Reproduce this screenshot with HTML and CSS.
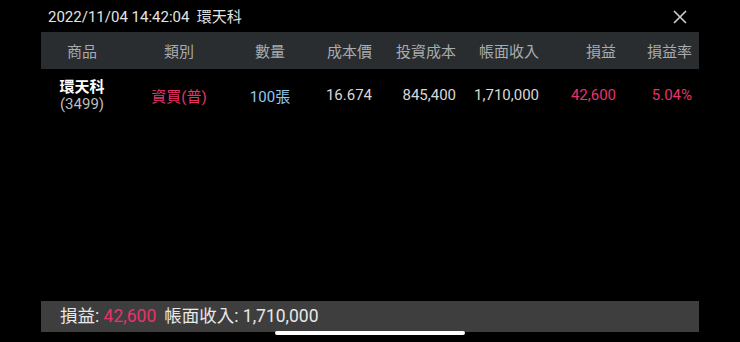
FILE: index.html
```html
<!DOCTYPE html>
<html lang="zh-Hant">
<head>
    <meta charset="UTF-8">
    <meta name="viewport" content="width=device-width, initial-scale=1.0">
    <title>庫存明細</title>
    <link rel="stylesheet" href="styles.css">
</head>
<body>
    <div class="screen">
        <div class="title-bar">
            <span class="title">2022/11/04 14:42:04&nbsp;&nbsp;環天科</span>
            <button class="close-btn" aria-label="關閉">
                <svg width="14" height="14" viewBox="0 0 14 14">
                    <path d="M1 1 L13 13 M13 1 L1 13" stroke="#cfcfcf" stroke-width="1.6" fill="none"/>
                </svg>
            </button>
        </div>

        <div class="table">
            <div class="table-row table-head">
                <span class="cell center">商品</span>
                <span class="cell center">類別</span>
                <span class="cell center">數量</span>
                <span class="cell">成本價</span>
                <span class="cell">投資成本</span>
                <span class="cell">帳面收入</span>
                <span class="cell">損益</span>
                <span class="cell">損益率</span>
            </div>
            <div class="table-row table-body">
                <div class="cell center product">
                    <div class="product-name">環天科</div>
                    <div class="product-code">(3499)</div>
                </div>
                <span class="cell center red">資買(普)</span>
                <span class="cell center blue">100張</span>
                <span class="cell">16.674</span>
                <span class="cell">845,400</span>
                <span class="cell">1,710,000</span>
                <span class="cell red">42,600</span>
                <span class="cell red">5.04%</span>
            </div>
        </div>

        <div class="summary"><span>損益: </span><span class="red">42,600</span><span class="gap">帳面收入: 1,710,000</span></div>
    </div>
    <div class="home-indicator"></div>
</body>
</html>
```

FILE: styles.css
```css
:root {
    --bg: #000000;
    --head-bg: #2a2d30;
    --summary-bg: #3e3e3e;
    --text: #e6e6e6;
    --muted: #a9abad;
    --red: #e8336a;
    --blue: #8ec8f2;
}
body {
    margin: 0;
    background: var(--bg);
    color: var(--text);
    font-family: Roboto, 'Noto Sans CJK TC', sans-serif;
    width: 740px;
    height: 342px;
    overflow: hidden;
    position: relative;
}
.screen {
    display: flex;
    flex-direction: column;
    height: 342px;
    padding: 0 41px;
    box-sizing: border-box;
}
.title-bar {
    height: 32px;
    display: flex;
    align-items: center;
    justify-content: space-between;
}
.title {
    font-size: 15px;
    padding-left: 7px;
    color: #e4e4e4;
    margin-top: -1px;
}
.close-btn {
    background: none;
    border: none;
    padding: 0;
    margin-right: 12px;
    margin-top: 1px;
    width: 14px;
    height: 14px;
    display: flex;
}
.table-row {
    display: grid;
    grid-template-columns: 82px 112px 70px 67px 84px 83px 77px 76px;
    padding-right: 7px;
    align-items: center;
    font-size: 15px;
}
.cell {
    text-align: right;
    white-space: nowrap;
}
.cell.center {
    text-align: center;
}
.table-head {
    height: 37px;
    background: var(--head-bg);
    color: var(--muted);
}
.table-body {
    height: 52px;
    color: #d8d8d8;
}
.product {
    line-height: 17px;
    margin-top: 1px;
}
.product-name {
    color: #ffffff;
    font-weight: bold;
}
.product-code {
    color: #bdbdbd;
}
.red {
    color: var(--red);
}
.blue {
    color: var(--blue);
}
.summary {
    margin-top: auto;
    margin-bottom: 10px;
    height: 31px;
    line-height: 31px;
    background: var(--summary-bg);
    padding-left: 19px;
    font-size: 17.5px;
    color: #e8e8e8;
    white-space: nowrap;
}
.summary .gap {
    margin-left: 8px;
}
.home-indicator {
    position: absolute;
    left: 275px;
    top: 331px;
    width: 190px;
    height: 4px;
    border-radius: 2px;
    background: #ffffff;
}
```
